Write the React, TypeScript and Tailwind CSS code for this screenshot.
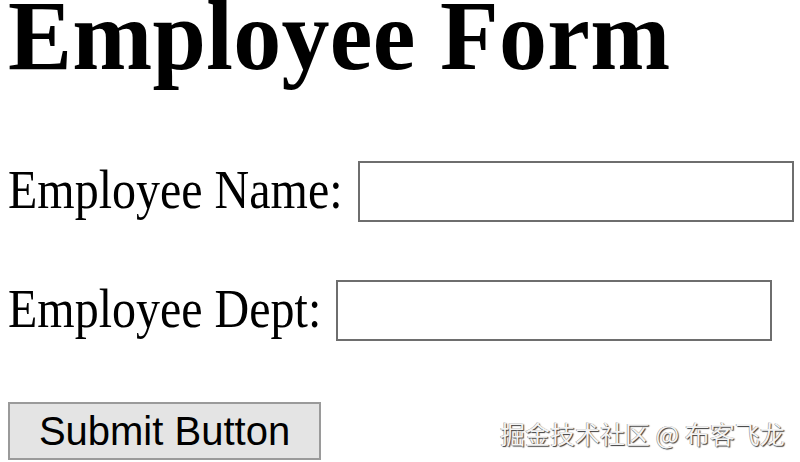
import React from 'react';

const serif = 'font-["Liberation_Serif","Times_New_Roman",serif]';

export default function App() {
  return (
    <div className="relative w-[800px] h-[462px] overflow-hidden bg-white text-black">
      <div className="flex flex-col pl-[8px]">
        {/* Title */}
        <h1 className={`${serif} font-bold text-[96px] leading-[80px] h-[80px] -mt-[5px] mb-[5px] tracking-[0.3px] origin-top scale-y-[1.03]`}>
          Employee Form
        </h1>

        {/* Name row */}
        <div className="flex items-center h-[61px] mt-[81px] gap-[15px]">
          <label className={`${serif} text-[48px] leading-[61px] origin-[50%_75%] scale-y-[1.15]`}>Employee Name:</label>
          <input
            type="text"
            className="w-[436px] h-[61px] border-2 border-[#6e6e6e] bg-white outline-none"
          />
        </div>

        {/* Dept row */}
        <div className="flex items-center h-[61px] mt-[58px] gap-[15px]">
          <label className={`${serif} text-[48px] leading-[61px] origin-[50%_75%] scale-y-[1.15]`}>Employee Dept:</label>
          <input
            type="text"
            className="w-[436px] h-[61px] border-2 border-[#6e6e6e] bg-white outline-none"
          />
        </div>

        {/* Submit */}
        <div className="mt-[61px] flex">
          <button
            type="submit"
            className='w-[313px] h-[58px] border-2 border-[#9a9a9a] bg-[#e4e4e4] font-["Liberation_Sans",Arial,sans-serif] text-[40px] leading-none text-black'
          >
            Submit Button
          </button>
        </div>
      </div>

      {/* Watermark */}
      <div className='absolute left-[500px] top-[417px] font-["Noto_Sans_CJK_SC",sans-serif] text-[25px] leading-[32px] text-[#f4f4f4] [text-shadow:1px_1px_1px_#3a3a3a,-0.5px_-0.5px_0.5px_#8a8a8a] whitespace-nowrap'>
        掘金技术社区 @ 布客飞龙
      </div>
    </div>
  );
}
